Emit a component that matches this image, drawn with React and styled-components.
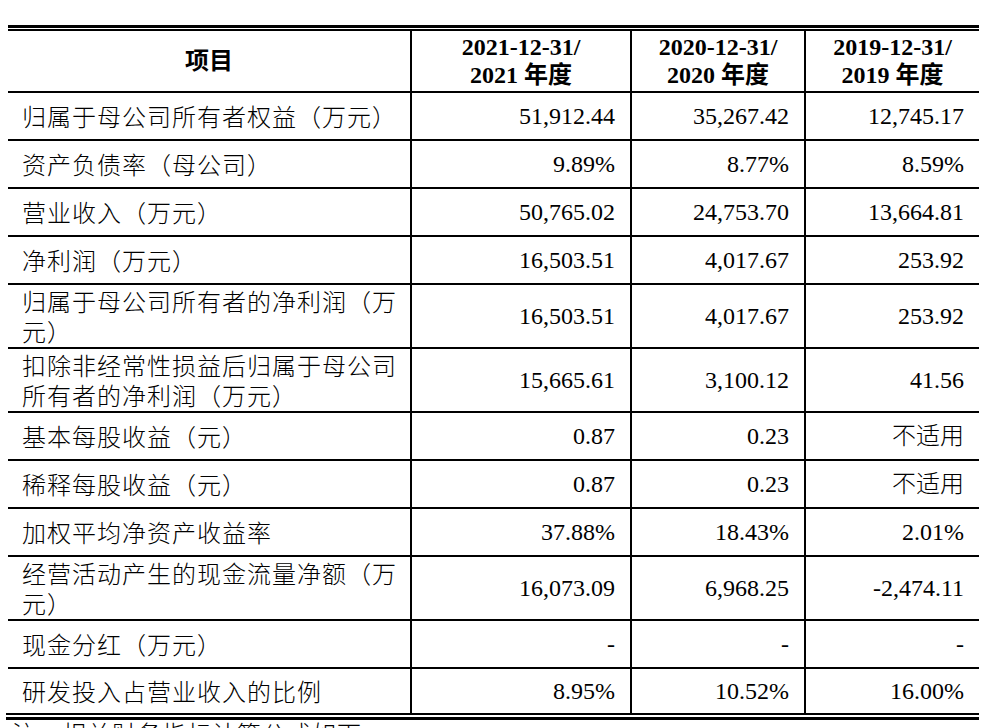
import React from "react";
import styled, { createGlobalStyle } from "styled-components";

const GlobalStyle = createGlobalStyle`
  *, *::before, *::after {
    box-sizing: border-box;
  }
  html, body {
    margin: 0;
    padding: 0;
    background: #fff;
  }
  body {
    color: #000;
    font-family: "Liberation Serif", "Noto Sans CJK SC", serif;
  }
`;

const headers = [
  ["2021-12-31/", "2021 年度"],
  ["2020-12-31/", "2020 年度"],
  ["2019-12-31/", "2019 年度"],
];

const rows = [
  ["归属于母公司所有者权益（万元）", "51,912.44", "35,267.42", "12,745.17"],
  ["资产负债率（母公司）", "9.89%", "8.77%", "8.59%"],
  ["营业收入（万元）", "50,765.02", "24,753.70", "13,664.81"],
  ["净利润（万元）", "16,503.51", "4,017.67", "253.92"],
  ["归属于母公司所有者的净利润（万元）", "16,503.51", "4,017.67", "253.92", true],
  ["扣除非经常性损益后归属于母公司所有者的净利润（万元）", "15,665.61", "3,100.12", "41.56", true],
  ["基本每股收益（元）", "0.87", "0.23", "不适用"],
  ["稀释每股收益（元）", "0.87", "0.23", "不适用"],
  ["加权平均净资产收益率", "37.88%", "18.43%", "2.01%"],
  ["经营活动产生的现金流量净额（万元）", "16,073.09", "6,968.25", "-2,474.11", true],
  ["现金分红（万元）", "-", "-", "-"],
  ["研发投入占营业收入的比例", "8.95%", "10.52%", "16.00%"],
];

function App() {
  return (
    <>
      <GlobalStyle />
      <Page>
        <Table>
          <HeadRow>
            <HeadCell>项目</HeadCell>
            {headers.map(([date, year], i) => (
              <HeadCell key={date} $last={i === headers.length - 1}>
                <span>{date}</span>
                <span>{year}</span>
              </HeadCell>
            ))}
          </HeadRow>
          {rows.map(([label, a, b, c, tall], i) => (
            <Row key={label} $tall={tall} $last={i === rows.length - 1}>
              <LabelCell>{label}</LabelCell>
              <ValueCell>{a}</ValueCell>
              <ValueCell>{b}</ValueCell>
              <ValueCell $last>{c}</ValueCell>
            </Row>
          ))}
        </Table>
        <BottomRule />
        <Note>注：相关财务指标计算公式如下：</Note>
      </Page>
    </>
  );
}

export default App;

const Page = styled.div`
  width: 979px;
  padding: 25px 0 0 8px;
`;

const Table = styled.div`
  border-top: 3px solid #000;
  padding-top: 1px;
`;

const columns = "404px 220px 174px 173px";

// header: thin top rule, 60px of content, 2px bottom rule
const HeadRow = styled.div`
  display: grid;
  grid-template-columns: ${columns};
  border-top: 2px solid #000;
  border-bottom: 2px solid #000;
  height: 64px;
`;

const HeadCell = styled.div`
  display: flex;
  flex-direction: column;
  justify-content: center;
  align-items: center;
  border-right: ${(p) => (p.$last ? "none" : "2px solid #000")};
  font-family: "Liberation Serif", "Noto Sans CJK SC", serif;
  font-weight: 700;
  font-size: 24px;
  line-height: 28px;
`;

const Row = styled.div`
  display: grid;
  grid-template-columns: ${columns};
  height: ${(p) => (p.$last ? "44px" : p.$tall ? "64px" : "48px")};
  border-bottom: ${(p) => (p.$last ? "none" : "2px solid #000")};
`;

const LabelCell = styled.div`
  display: flex;
  align-items: center;
  padding-left: 14px;
  border-right: 2px solid #000;
  font-family: "Noto Sans CJK SC", sans-serif;
  font-weight: 300;
  font-size: 24px;
  line-height: 30px;
  letter-spacing: 1px;
`;

const ValueCell = styled.div`
  display: flex;
  align-items: center;
  justify-content: flex-end;
  padding-right: 15px;
  border-right: ${(p) => (p.$last ? "none" : "2px solid #000")};
  font-family: "Liberation Serif", "Noto Sans CJK SC", serif;
  font-weight: 300;
  font-size: 24px;
  line-height: 30px;
`;

// closing double rule: thin line, gap, thick line
const BottomRule = styled.div`
  margin-left: -2px;
  width: 973px;
  height: 7px;
  background: linear-gradient(#000 0 2px, #fff 2px 4px, #000 4px 7px);
`;

const Note = styled.div`
  padding-left: 4px;
  font-family: "Noto Sans CJK SC", sans-serif;
  font-weight: 300;
  font-size: 24px;
  line-height: 26px;
  letter-spacing: 1px;
`;
